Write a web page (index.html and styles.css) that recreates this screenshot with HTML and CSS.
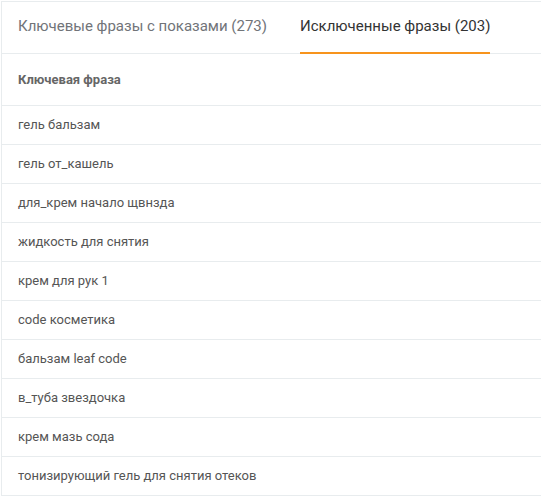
FILE: index.html
```html
<!doctype html>
<html lang="ru">
  <head>
    <meta charset="UTF-8" />
    <title>Фразы</title>
    <link rel="stylesheet" href="styles.css">
  </head>
  <body>
    <div class="panel">
      <div class="tabs">
        <div class="tab">Ключевые фразы с показами (273)</div>
        <div class="tab active">Исключенные фразы (203)</div>
      </div>
      <div class="row head">Ключевая фраза</div>
      <div class="row">гель бальзам</div>
      <div class="row">гель от_кашель</div>
      <div class="row">для_крем начало щвнзда</div>
      <div class="row">жидкость для снятия</div>
      <div class="row">крем для рук 1</div>
      <div class="row">code косметика</div>
      <div class="row">бальзам leaf code</div>
      <div class="row">в_туба звездочка</div>
      <div class="row">крем мазь сода</div>
      <div class="row">тонизирующий гель для снятия отеков</div>
    </div>
  </body>
</html>
```

FILE: styles.css
```css
body {
  margin: 0;
  background: #fff;
  font-family: Roboto, "Liberation Sans", sans-serif;
}

.panel {
  margin: 1px 0 0 1px;
  border-top: 1px solid #e8ecee;
  border-left: 1px solid #e8ecee;
}

.tabs {
  display: flex;
  gap: 33px;
  padding-left: 16px;
  border-bottom: 1px solid #e8ecee;
}

.tab {
  height: 50px;
  line-height: 49px;
  margin-bottom: -1px;
  border-bottom: 2px solid transparent;
  font-size: 15px;
  color: #717479;
}

.tab.active {
  color: #333;
  border-bottom-color: #f7941d;
}

.row {
  display: flex;
  align-items: center;
  box-sizing: border-box;
  height: 39px;
  padding: 0 0 2px 16px;
  border-bottom: 1px solid #e8ecee;
  font-size: 13px;
  color: #555;
}

.row.head {
  height: 52px;
  padding-bottom: 0;
  font-size: 13px;
  font-weight: 700;
  color: #666;
}
```
